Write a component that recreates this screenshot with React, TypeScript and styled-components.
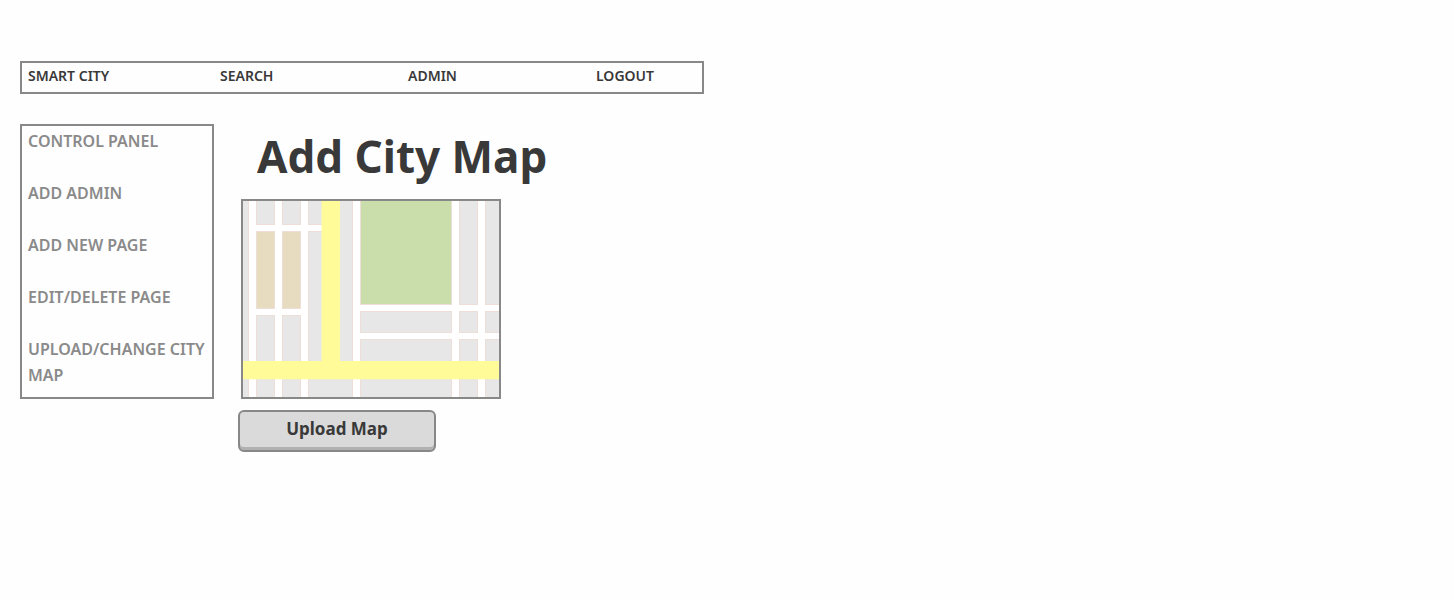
import React from "react";
import styled, { createGlobalStyle } from "styled-components";

const GlobalStyle = createGlobalStyle`
  *, *::before, *::after { box-sizing: border-box; }
  body {
    margin: 0;
    background: #fefefe;
    color: #393939;
    font-family: "Noto Sans", "Open Sans", sans-serif;
  }
`;

const Page = styled.div`
  max-width: 724px;
  padding: 61px 20px 20px;
`;

const TopNav = styled.nav`
  display: grid;
  grid-template-columns: 192fr 188fr 188fr 106fr;
  margin-bottom: 30px;
  padding: 4px 0 7px 6px;
  border: 2px solid #888;
`;

const TopLink = styled.a`
  color: #393939;
  font-size: 14px;
  font-weight: 600;
  line-height: 18px;
  text-decoration: none;
`;

const Columns = styled.div`
  display: flex;
  align-items: flex-start;
  gap: 24px;
`;

const SideNav = styled.nav`
  display: flex;
  flex: 0 0 194px;
  flex-direction: column;
  gap: 26px;
  padding: 2px 0 9px 6px;
  border: 2px solid #888;
`;

const SideLink = styled.a`
  color: #8a8a8a;
  font-size: 16px;
  font-weight: 600;
  line-height: 26px;
  text-decoration: none;
`;

const Main = styled.main`
  flex: 1;
  min-width: 0;
`;

const Title = styled.h1`
  margin: 0;
  padding: 0 0 11px 19px;
  font-size: 44px;
  font-weight: 700;
  line-height: 64px;
`;

const MapFrame = styled.div`
  max-width: 260px;
  margin: 0 0 11px 3px;
  border: 2px solid #888;
`;

const MapImage = styled.svg`
  display: block;
  width: 100%;
  height: auto;
`;

const UploadButton = styled.button`
  display: block;
  width: 198px;
  padding: 5px 0 9px;
  border: 2px solid #888;
  border-radius: 6px;
  background: #dadada;
  box-shadow: inset 0 -3px 0 #b1b1b1;
  color: #393939;
  font: inherit;
  font-size: 17px;
  font-weight: 700;
  line-height: 24px;
`;

const topLinks = ["SMART CITY", "SEARCH", "ADMIN", "LOGOUT"];
const sideLinks = [
  "CONTROL PANEL",
  "ADD ADMIN",
  "ADD NEW PAGE",
  "EDIT/DELETE PAGE",
  "UPLOAD/CHANGE CITY MAP",
];

const GRAY = "#e7e7e7";
const SAND = "#e7dcbf";
const PARK = "#cadeab";

// City blocks: x, y, width, height, fill
const blocks: [number, number, number, number, string][] = [
  [-2, -2, 8, 200, GRAY],
  [13, -2, 19, 26, GRAY],
  [39, -2, 19, 26, GRAY],
  [65, -2, 16, 26, GRAY],
  [13, 30, 19, 78, SAND],
  [39, 30, 19, 78, SAND],
  [65, 30, 16, 131, GRAY],
  [13, 114, 19, 47, GRAY],
  [39, 114, 19, 47, GRAY],
  [96, -2, 14, 163, GRAY],
  [117, -2, 92, 106, PARK],
  [117, 110, 92, 22, GRAY],
  [117, 138, 92, 23, GRAY],
  [216, -2, 19, 106, GRAY],
  [216, 110, 19, 22, GRAY],
  [216, 138, 19, 23, GRAY],
  [242, -2, 16, 106, GRAY],
  [242, 110, 16, 22, GRAY],
  [242, 138, 16, 23, GRAY],
  [13, 177, 19, 21, GRAY],
  [39, 177, 19, 21, GRAY],
  [65, 177, 45, 21, GRAY],
  [117, 177, 92, 21, GRAY],
  [216, 177, 19, 21, GRAY],
  [242, 177, 16, 21, GRAY],
];

const CityMap = () => (
  <MapImage viewBox="0 0 256 196" role="img" aria-label="City map">
    <rect width="256" height="196" fill="#fff" />
    {blocks.map(([x, y, w, h, fill]) => (
      <rect
        key={`${x}-${y}`}
        x={x + 0.5}
        y={y + 0.5}
        width={w - 1}
        height={h - 1}
        fill={fill}
        stroke="#eddfd8"
      />
    ))}
    <path d="M78.6 0H97V160H256V178.2H0V160H78.6Z" fill="#fffb99" />
  </MapImage>
);

export default function App() {
  return (
    <>
      <GlobalStyle />
      <Page>
        <TopNav aria-label="Main">
          {topLinks.map((label) => (
            <TopLink key={label} href="#">{label}</TopLink>
          ))}
        </TopNav>
        <Columns>
          <SideNav aria-label="Administration">
            {sideLinks.map((label) => (
              <SideLink key={label} href="#">{label}</SideLink>
            ))}
          </SideNav>
          <Main>
            <Title>Add City Map</Title>
            <MapFrame>
              <CityMap />
            </MapFrame>
            <UploadButton type="button">Upload Map</UploadButton>
          </Main>
        </Columns>
      </Page>
    </>
  );
}
